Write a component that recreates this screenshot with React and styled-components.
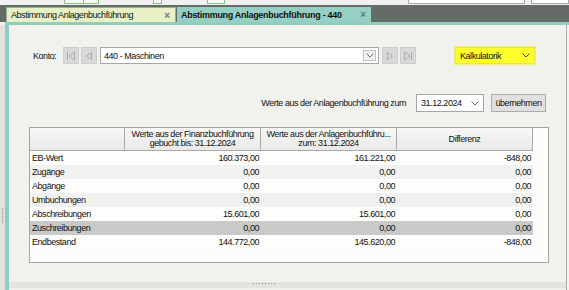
import React from "react";
import styled, { createGlobalStyle } from "styled-components";

const Global = createGlobalStyle`
  html, body { margin: 0; padding: 0; background: #f1f1ed; }
  body { font-family: "Liberation Sans", Arial, sans-serif; }
  * { box-sizing: border-box; }
`;

const Screen = styled.div`
  width: 569px;
  height: 290px;
  overflow: hidden;
  display: flex;
  flex-direction: column;
  background: #f1f1ed;
  font-family: "Liberation Sans", Arial, sans-serif;
  font-size: 9px;
  letter-spacing: -0.45px;
  color: #111;
`;

const TopStrip = styled.div`
  height: 5px;
  background: #f0f0f0;
  display: flex;
  align-items: flex-start;
  padding-left: 64px;
`;

const StripBox = styled.div`
  height: 4px;
  width: ${(p) => p.$w}px;
  margin-left: ${(p) => p.$ml || 0}px;
  border: 1px solid ${(p) => (p.$green ? "#8cc08c" : "#a8a8a8")};
  border-top: none;
  background: ${(p) => (p.$green ? "#f4fbf0" : "#ffffff")};
  display: flex;
`;

const StripDivider = styled.div`
  width: 1px;
  margin-left: 18px;
  background: #8cc08c;
`;

const TabBar = styled.div`
  height: 17px;
  background: #656b67;
  display: flex;
  align-items: flex-end;
  padding-left: 6px;
  gap: 1px;
`;

const Tab = styled.div`
  height: 15px;
  width: ${(p) => p.$w}px;
  display: flex;
  align-items: center;
  justify-content: space-between;
  padding: 0 5px 0 4px;
  background: ${(p) => (p.$active ? "#96d0c5" : "#e7f1c5")};
  border: ${(p) => (p.$active ? "none" : "1px solid #9aae90")};
  border-bottom: none;
  font-weight: ${(p) => (p.$active ? 700 : 400)};
  letter-spacing: ${(p) => (p.$active ? "-0.3px" : "-0.45px")};
  color: #111;
  white-space: nowrap;
`;

const TabClose = styled.span`
  font-size: 10px;
  font-weight: 700;
  color: ${(p) => (p.$active ? "#5e7a74" : "#777")};
  letter-spacing: 0;
`;

const TealLine = styled.div`
  height: 3px;
  background: #90ccc0;
  margin-left: 5px;
`;

const BodyRow = styled.div`
  flex: 1;
  display: flex;
  min-height: 0;
`;

const LeftStrip = styled.div`
  width: 5px;
  background: #e1e1dd;
  display: flex;
  flex-direction: column;
  align-items: center;
  padding-top: 183px;
`;

const VGrip = styled.div`
  width: 1px;
  height: 15px;
  background-image: linear-gradient(#8a8a8a 50%, transparent 50%);
  background-size: 1px 2px;
`;

const TealBar = styled.div`
  width: 4px;
  background: #90ccc0;
`;

const Panel = styled.div`
  flex: 1;
  display: flex;
  flex-direction: column;
  min-width: 0;
`;

const RightEdge = styled.div`
  width: 3px;
  border-left: 1px solid #a9a9a6;
  background: #f4f4f2;
`;

const Content = styled.div`
  flex: 1;
  display: flex;
  flex-direction: column;
  padding-top: 22px;
`;

const KontoRow = styled.div`
  height: 17px;
  display: flex;
  align-items: center;
  padding-left: 24px;
`;

const Label = styled.span`
  width: ${(p) => p.$w}px;
  flex: none;
  white-space: nowrap;
`;

const NavButton = styled.div`
  width: 16px;
  height: 17px;
  flex: none;
  margin-left: ${(p) => p.$ml || 0}px;
  background: #d9d9d7;
  border: 1px solid #cdcdcb;
  display: flex;
  align-items: center;
  justify-content: center;
`;

const Combo = styled.div`
  height: ${(p) => p.$h || 17}px;
  width: ${(p) => p.$w}px;
  flex: none;
  margin-left: ${(p) => p.$ml || 0}px;
  background: ${(p) => (p.$yellow ? "#ffff2e" : "#ffffff")};
  border: 1px solid ${(p) => (p.$yellow ? "#e6e64a" : "#a6a6a6")};
  box-shadow: ${(p) => (p.$yellow ? "0 0 1px 1px #f2f27a" : "none")};
  display: flex;
  align-items: center;
  justify-content: space-between;
  padding-left: ${(p) => p.$pl || 3}px;
  padding-right: ${(p) => p.$pr || 3}px;
  white-space: nowrap;
  color: #111;
`;

const DropButton = styled.div`
  width: 13px;
  height: 11px;
  border: 1px solid #c4c4c4;
  background: #f0f0f0;
  display: flex;
  align-items: center;
  justify-content: center;
`;

const DateRow = styled.div`
  margin-top: 30px;
  height: 18px;
  display: flex;
  align-items: center;
  justify-content: flex-end;
  padding-right: 20px;
`;

const PushButton = styled.div`
  width: 55px;
  height: 18px;
  margin-left: 7px;
  background: #e1e1e1;
  border: 1px solid #adadad;
  display: flex;
  align-items: center;
  justify-content: center;
  color: #111;
`;

const TableBox = styled.div`
  margin-top: 15px;
  margin-left: 20px;
  width: 520px;
  height: 136px;
  border: 1px solid #a3a3a3;
  background: #fcfcfa;
`;

const Grid = styled.div`
  display: grid;
  grid-template-columns: 95px 136px 136px 136px;
  width: 503px;
`;

const HeadCell = styled.div`
  height: 23px;
  background: linear-gradient(#f8f8f7, #e9e9e7);
  border-right: 1px solid #a9a9a9;
  border-bottom: 1px solid #a9a9a9;
  display: flex;
  flex-direction: column;
  align-items: center;
  justify-content: center;
  text-align: center;
  line-height: 9px;
  white-space: nowrap;
  color: #111;
`;

const Cell = styled.div`
  height: 14px;
  line-height: 14px;
  background: ${(p) => (p.$selected ? "#c9c9c8" : p.$alt ? "#f1f1ef" : "#fdfdfc")};
  text-align: ${(p) => (p.$num ? "right" : "left")};
  padding: ${(p) => (p.$num ? "0 2px 0 0" : "0 0 0 2px")};
  white-space: nowrap;
  color: #111;
`;

const Splitter = styled.div`
  height: 8px;
  background: linear-gradient(#e3e3df 0 6px, #efefeb 6px);
  display: flex;
  justify-content: flex-start;
  padding-top: 1px;
  padding-left: 244px;
`;

const HGrip = styled.div`
  width: 24px;
  height: 1px;
  background-image: linear-gradient(90deg, #8a8a8a 50%, transparent 50%);
  background-size: 3px 1px;
`;

const Chevron = ({ color = "#555" }) => (
  <svg width="8" height="5" viewBox="0 0 8 5">
    <polyline points="0.5,0.5 4,4 7.5,0.5" fill="none" stroke={color} strokeWidth="1" />
  </svg>
);

const NavIcon = ({ dir, bar }) => {
  const c = "#a9a9a9";
  return (
    <svg width="10" height="10" viewBox="0 0 10 10">
      {dir === "left" ? (
        <>
          {bar && <line x1="1.5" y1="1" x2="1.5" y2="9" stroke={c} strokeWidth="1" />}
          <polygon points={bar ? "8.5,1 3,5 8.5,9" : "7.5,1.5 2.5,5 7.5,8.5"} fill="none" stroke={c} strokeWidth="1" />
        </>
      ) : (
        <>
          {bar && <line x1="8.5" y1="1" x2="8.5" y2="9" stroke={c} strokeWidth="1" />}
          <polygon points={bar ? "1.5,1 7,5 1.5,9" : "2.5,1.5 7.5,5 2.5,8.5"} fill="none" stroke={c} strokeWidth="1" />
        </>
      )}
    </svg>
  );
};

const rows = [
  ["EB-Wert", "160.373,00", "161.221,00", "-848,00"],
  ["Zugänge", "0,00", "0,00", "0,00"],
  ["Abgänge", "0,00", "0,00", "0,00"],
  ["Umbuchungen", "0,00", "0,00", "0,00"],
  ["Abschreibungen", "15.601,00", "15.601,00", "0,00"],
  ["Zuschreibungen", "0,00", "0,00", "0,00"],
  ["Endbestand", "144.772,00", "145.620,00", "-848,00"],
];

export default function App() {
  return (
    <>
      <Global />
      <Screen>
        <TopStrip>
          <StripBox $green $w={37}>
            <StripDivider />
          </StripBox>
          <StripBox $green $w={9} $ml={54} />
          <StripBox $green $w={19} $ml={45} />
          <StripBox $w={122} $ml={183} />
          <StripBox $w={40} $ml={6} />
        </TopStrip>
        <TabBar>
          <Tab $w={170}>
            <span>Abstimmung Anlagenbuchführung</span>
            <TabClose>×</TabClose>
          </Tab>
          <Tab $w={194} $active>
            <span>Abstimmung Anlagenbuchführung - 440</span>
            <TabClose $active>×</TabClose>
          </Tab>
        </TabBar>
        <TealLine />
        <BodyRow>
          <LeftStrip>
            <VGrip />
          </LeftStrip>
          <TealBar />
          <Panel>
            <Content>
              <KontoRow>
                <Label $w={30}>Konto:</Label>
                <NavButton>
                  <NavIcon dir="left" bar />
                </NavButton>
                <NavButton $ml={2}>
                  <NavIcon dir="left" />
                </NavButton>
                <Combo $w={279} $ml={3} $pr={2}>
                  <span>440 - Maschinen</span>
                  <DropButton>
                    <Chevron color="#666" />
                  </DropButton>
                </Combo>
                <NavButton $ml={3}>
                  <NavIcon dir="right" />
                </NavButton>
                <NavButton $ml={2}>
                  <NavIcon dir="right" bar />
                </NavButton>
                <Combo $yellow $w={80} $ml={39} $pl={4} $pr={4}>
                  <span>Kalkulatorik</span>
                  <Chevron color="#444" />
                </Combo>
              </KontoRow>
              <DateRow>
                <span>Werte aus der Anlagenbuchführung zum</span>
                <Combo $w={68} $ml={10} $h={18} $pl={4} $pr={4}>
                  <span>31.12.2024</span>
                  <Chevron color="#666" />
                </Combo>
                <PushButton>übernehmen</PushButton>
              </DateRow>
              <TableBox>
                <Grid>
                  <HeadCell />
                  <HeadCell>
                    <span>Werte aus der Finanzbuchführung</span>
                    <span>gebucht bis: 31.12.2024</span>
                  </HeadCell>
                  <HeadCell>
                    <span>Werte aus der Anlagenbuchführu...</span>
                    <span>zum: 31.12.2024</span>
                  </HeadCell>
                  <HeadCell>
                    <span>Differenz</span>
                  </HeadCell>
                  {rows.map((r, i) =>
                    r.map((v, j) => (
                      <Cell
                        key={`${i}-${j}`}
                        $num={j > 0}
                        $alt={i % 2 === 1}
                        $selected={i === 5}
                      >
                        {v}
                      </Cell>
                    ))
                  )}
                </Grid>
              </TableBox>
            </Content>
            <Splitter>
              <HGrip />
            </Splitter>
          </Panel>
          <RightEdge />
        </BodyRow>
      </Screen>
    </>
  );
}
